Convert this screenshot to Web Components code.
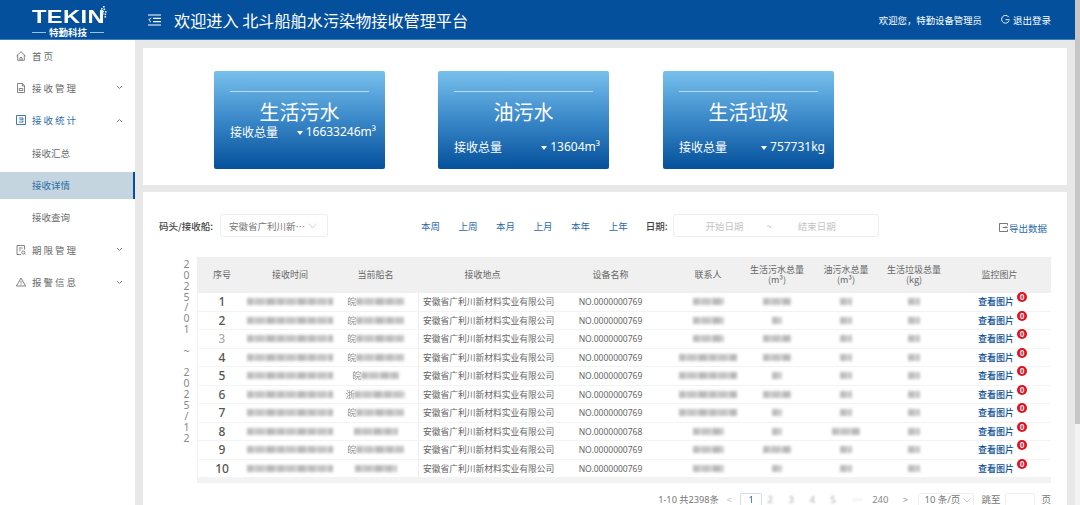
<!DOCTYPE html>
<html lang="zh">
<head>
<meta charset="utf-8">
<title>北斗船舶水污染物接收管理平台</title>
<style>
  html, body {
    margin: 0;
    height: 505px;
    overflow: hidden;
    font-family: "Noto Sans", "Noto Sans CJK SC", sans-serif;
  }
</style>
</head>
<body>
<tk-app></tk-app>
<script>
class TkHeader extends HTMLElement {
  constructor () {
    super()
    this.shadow = this.attachShadow({ mode: 'open' })
  }

  connectedCallback () {
    this.shadow.innerHTML =
      /* html */`
      <style>
        :host{
            align-items: center;
            background-color: #04509d;
            border-bottom: 1px solid #3d80bd;
            color: #fff;
            display: flex;
            height: 39px;
        }
        .logo{
            color: #fff;
            flex: none;
            padding-left: 32px;
            position: relative;
            width: 116px;
        }
        .logo-name{
            font-family: "Liberation Sans", sans-serif;
            font-size: 18.500px;
            font-weight: bold;
            letter-spacing: 0.3px;
            line-height: 18px;
            margin-top: 7px;
            transform: scaleX(1.28);
            transform-origin: left;
        }
        .logo-sub{
            align-items: center;
            display: flex;
            font-family: "Noto Sans CJK SC", sans-serif;
            font-size: 9.500px;
            font-weight: bold;
            gap: 3px;
            height: 12px;
            line-height: 12px;
            width: 72px;
        }
        .logo-sub i{
            background-color: #9dbfe0;
            flex: 1;
            height: 1px;
        }
        .logo svg{
            left: 97px;
            position: absolute;
            top: 5px;
        }
        .toggle{
            display: block;
            flex: none;
            margin-right: 13px;
        }
        h1{
            flex: 1;
            font-family: "Noto Sans CJK SC", sans-serif;
            font-size: 16.150px;
            font-weight: 400;
            margin: 0;
            white-space: pre;
        }
        .user{
            font-family: "Noto Sans CJK SC", sans-serif;
            font-size: 9.400px;
            margin-right: 19px;
        }
        .logout{
            align-items: center;
            display: flex;
            font-family: "Noto Sans CJK SC", sans-serif;
            font-size: 9.500px;
            gap: 3px;
            margin-right: 24px;
        }
      </style>
      <div class="logo">
        <div class="logo-name">TEKIN</div>
        <div class="logo-sub"><i></i><span>特勤科技</span><i></i></div>
        <svg width="10" height="12" viewBox="0 0 10 12" fill="#e4eff9">
          <rect x="6" y="0" width="1.6" height="1.6"/><rect x="4" y="2" width="1.6" height="1.6"/><rect x="6.500" y="2.500" width="1.6" height="1.6"/>
          <rect x="3" y="4.500" width="1.6" height="1.6"/><rect x="5.500" y="4.800" width="1.6" height="1.6"/><rect x="8" y="5" width="1.6" height="1.6"/>
          <rect x="5" y="7" width="1.6" height="1.6"/><rect x="7.500" y="7.500" width="1.6" height="1.6"/><rect x="7.500" y="10" width="1.6" height="1.6"/>
        </svg>
      </div>
      <svg class="toggle" width="13" height="12" viewBox="0 0 13 12" fill="none" stroke="#fff" stroke-width="1.2">
        <path d="M0 1h13M5 4.300h8M5 7.600h8M0 11h13"/><path d="M3 3.800 0.800 6 3 8.200" stroke-width="1"/>
      </svg>
      <h1>欢迎进入 北斗船舶水污染物接收管理平台</h1>
      <span class="user">欢迎您，特勤设备管理员</span>
      <span class="logout">
        <svg width="9" height="9" viewBox="0 0 9 9" fill="none" stroke="#fff" stroke-width="0.9"><path d="M7.800 2.200A3.900 3.900 0 1 0 8.200 5.500M4.500 4.700h4"/></svg>
        退出登录
      </span>
      `
  }
}

customElements.define('tk-header', TkHeader)

class TkMenuItem extends HTMLElement {
  constructor () {
    super()
    this.shadow = this.attachShadow({ mode: 'open' })
  }

  connectedCallback () {
    const arrow = this.getAttribute('arrow')
    const chevron = arrow
      ? `<svg class="arrow" width="7" height="5" viewBox="0 0 7 5" fill="none" stroke="currentColor" stroke-width="0.9"><path d="${arrow === 'up' ? 'M1 4 3.500 1.500 6 4' : 'M1 1 3.500 3.500 6 1'}"/></svg>`
      : ''
    this.shadow.innerHTML =
      /* html */`
      <style>
        :host{
            align-items: center;
            color: #6a6a6a;
            display: flex;
            font-family: "Noto Sans CJK SC", sans-serif;
            font-size: 9.500px;
            height: 27px;
            letter-spacing: 2px;
            padding-left: 16px;
        }
        :host([open]){
            color: #2d6ca8;
        }
        :host([sub]){
            letter-spacing: 0;
            padding-left: 32px;
        }
        :host([active]){
            background-color: #c5d5df;
            border-right: 2px solid #04509d;
            color: #2a6ba6;
        }
        .icon{
            display: flex;
            margin-right: 6px;
            width: 10px;
        }
        ::slotted(svg){
            display: block;
        }
        .arrow{
            color: #777;
            margin-left: auto;
            margin-right: 12px;
        }
      </style>
      ${this.hasAttribute('sub') ? '' : '<span class="icon"><slot name="icon"></slot></span>'}
      <span><slot></slot></span>
      ${chevron}
      `
  }
}

customElements.define('tk-menu-item', TkMenuItem)

class TkSidebar extends HTMLElement {
  constructor () {
    super()
    this.shadow = this.attachShadow({ mode: 'open' })
  }

  connectedCallback () {
    this.shadow.innerHTML =
      /* html */`
      <style>
        :host{
            background-color: #fff;
            display: flex;
            flex: none;
            flex-direction: column;
            gap: 5.400px;
            padding-top: 2px;
            width: 135px;
        }
      </style>
      <tk-menu-item>
        <svg slot="icon" width="10" height="10" viewBox="0 0 10 10" fill="none" stroke="#666" stroke-width="0.8"><path d="M0.500 5 5 0.700 9.500 5M1.700 4v5.300h6.600V4M4 9.300V6.500h2v2.800"/></svg>
        首页
      </tk-menu-item>
      <tk-menu-item arrow="down">
        <svg slot="icon" width="10" height="10" viewBox="0 0 10 10" fill="none" stroke="#666" stroke-width="0.8"><path d="M1.500 0.500h5l2 2.200v6.800h-7zM6.300 0.700v2.200h2.200M3.200 5.500h3.600v2h-3.600z"/></svg>
        接收管理
      </tk-menu-item>
      <tk-menu-item arrow="up" open>
        <svg slot="icon" width="10" height="10" viewBox="0 0 10 10" fill="none" stroke="#2d6ca8" stroke-width="0.9"><path d="M0.500 0.500h9v9h-9zM3 3h4v1.800H3.500M3 7h4V5.500"/></svg>
        接收统计
      </tk-menu-item>
      <tk-menu-item sub>接收汇总</tk-menu-item>
      <tk-menu-item sub active>接收详情</tk-menu-item>
      <tk-menu-item sub>接收查询</tk-menu-item>
      <tk-menu-item arrow="down">
        <svg slot="icon" width="10" height="10" viewBox="0 0 10 10" fill="none" stroke="#666" stroke-width="0.8"><path d="M8.500 4.500V0.500h-7.500v9h4M2.800 3h4M2.800 5h2"/><circle cx="7.300" cy="7.500" r="1.500"/><path d="M8.400 8.600 9.600 9.700"/></svg>
        期限管理
      </tk-menu-item>
      <tk-menu-item arrow="down">
        <svg slot="icon" width="10" height="10" viewBox="0 0 10 10" fill="none" stroke="#666" stroke-width="0.8"><path d="M5 1 9.600 9H0.400zM5 3.800v2.700M5 7.200v0.900"/></svg>
        报警信息
      </tk-menu-item>
      `
  }
}

customElements.define('tk-sidebar', TkSidebar)

class StatCard extends HTMLElement {
  constructor () {
    super()
    this.shadow = this.attachShadow({ mode: 'open' })
  }

  connectedCallback () {
    this.shadow.innerHTML =
      /* html */`
      <style>
        :host{
            background: linear-gradient(180deg, #78c0ec 0%, #3f8dcc 45%, #04509b 100%);
            border-radius: 2px;
            box-sizing: border-box;
            color: #fff;
            display: block;
            font-family: "Noto Sans CJK SC", sans-serif;
            height: 98px;
            padding: 20px 9px 0 16px;
            width: 171px;
        }
        .rule{
            background-color: #b5dbf3;
            height: 1px;
            margin-right: 7px;
        }
        .title{
            font-size: 20px;
            line-height: 24px;
            margin-right: 7px;
            margin-top: 8px;
            text-align: center;
        }
        .total{
            align-items: center;
            display: flex;
            font-size: 12px;
            justify-content: space-between;
            line-height: 16px;
        }
        :host([low]) .total{
            margin-top: 15px;
        }
        .value{
            align-items: center;
            display: flex;
            font-family: "Noto Sans", sans-serif;
            white-space: nowrap;
        }
        .value::before{
            border-left: 3.500px solid transparent;
            border-right: 3.500px solid transparent;
            border-top: 4px solid #fff;
            content: "";
            margin-right: 3px;
            margin-top: 2px;
        }
      </style>
      <div class="rule"></div>
      <div class="title">${this.getAttribute('title-text')}</div>
      <div class="total">
        <span>接收总量</span>
        <span class="value"><slot></slot></span>
      </div>
      `
  }
}

customElements.define('stat-card', StatCard)

class TkFilter extends HTMLElement {
  constructor () {
    super()
    this.shadow = this.attachShadow({ mode: 'open' })
  }

  connectedCallback () {
    const links = ['本周', '上周', '本月', '上月', '本年', '上年']
    this.shadow.innerHTML =
      /* html */`
      <style>
        :host{
            align-items: center;
            display: flex;
            font-family: "Noto Sans CJK SC", sans-serif;
            font-size: 9.500px;
            height: 23px;
        }
        .label{
            color: #444;
            font-weight: 500;
        }
        .box{
            align-items: center;
            border: 1px solid #eee;
            border-radius: 3px;
            box-sizing: border-box;
            color: #777;
            display: flex;
            height: 23px;
        }
        .select{
            margin-left: 7px;
            padding: 0 10px 0 8px;
            width: 108px;
        }
        .select span{
            flex: 1;
            white-space: nowrap;
        }
        .links{
            color: #2d6ca8;
            display: flex;
            gap: 18.500px;
            margin-left: 93px;
        }
        .date-label{
            margin-left: 18px;
        }
        .date{
            color: #c4c4c4;
            margin-left: 6px;
            padding-left: 31px;
            width: 206px;
        }
        .date .tilde{
            margin: 0 26px 0 23px;
        }
        .export{
            align-items: center;
            color: #2d6ca8;
            display: flex;
            gap: 1px;
            margin-left: auto;
            margin-right: 4px;
            margin-top: 4px;
        }
      </style>
      <span class="label">码头/接收船:</span>
      <div class="box select">
        <span>安徽省广利川新⋯</span>
        <svg width="9" height="6" viewBox="0 0 9 6" fill="none" stroke="#c8c8c8" stroke-width="0.8"><path d="M0.500 0.500 4.500 5 8.500 0.500"/></svg>
      </div>
      <div class="links">${links.map(text => `<span>${text}</span>`).join('')}</div>
      <span class="label date-label">日期:</span>
      <div class="box date">
        <span>开始日期</span><span class="tilde">~</span><span>结束日期</span>
      </div>
      <span class="export">
        <svg width="9" height="9" viewBox="0 0 9 9" fill="none" stroke="#555" stroke-width="0.8"><path d="M8.500 2.500V0.500H0.500v8h8V6.500M3.500 4.500h5M6.500 3 8 4.500"/></svg>
        导出数据
      </span>
      `
  }
}

customElements.define('tk-filter', TkFilter)

class RecordTable extends HTMLElement {
  constructor () {
    super()
    this.shadow = this.attachShadow({ mode: 'open' })
  }

  connectedCallback () {
    // province char, name, contact, sewage, oil smudge widths, device suffix
    const rows = [
      ['皖', 48, 31, 28, 12, '769'], ['皖', 48, 31, 10, 12, '769'], ['皖', 48, 31, 28, 12, '769'], ['皖', 48, 58, 28, 12, '769'],
      ['皖', 38, 58, 10, 12, '769'], ['浙', 51, 58, 28, 12, '769'], ['皖', 48, 58, 10, 12, '769'], ['', 44, 31, 10, 28, '768'],
      ['皖', 48, 31, 28, 12, '769'], ['', 42, 31, 10, 12, '769']
    ]
    const smudge = width => `<i class="smudge" style="width:${width}px"></i>`
    this.shadow.innerHTML =
      /* html */`
      <style>
        :host{
            display: flex;
            font-family: "Noto Sans", "Noto Sans CJK SC", sans-serif;
        }
        .dates{
            box-sizing: border-box;
            color: #888;
            flex: none;
            font-size: 10.500px;
            line-height: 10.850px;
            padding: 2px 5px 0 22px;
            text-align: center;
            width: 38px;
        }
        .table{
            box-shadow: 0 5px 0 #f3f3f3;
            flex: 1;
        }
        .row{
            display: grid;
            grid-template-columns: 50px 86px 85px 129px 127px 68px 70px 68px 68px 103px;
        }
        .head{
            background-color: #f0f0f0;
            color: #666;
            font-family: "Noto Sans CJK SC", sans-serif;
            font-size: 9px;
            height: 36px;
            line-height: 10px;
        }
        .head div{
            align-items: center;
            display: flex;
            justify-content: center;
            text-align: center;
        }
        .body{
            border-bottom: 1px solid #f3f3f3;
            box-shadow: inset 1px 0 0 #f3f3f3;
            box-sizing: border-box;
            color: #666;
            font-size: 8.500px;
            height: 18.500px;
        }
        .body div{
            align-items: center;
            display: flex;
            justify-content: center;
            white-space: nowrap;
        }
        .body .num{
            color: #555;
            font-size: 12px;
            font-weight: 500;
        }
        .body .faded{
            color: #aaa;
            filter: blur(0.500px);
        }
        .body .place{
            border-left: 1px solid #eee;
            font-family: "Noto Sans CJK SC", sans-serif;
            font-size: 8.750px;
            justify-content: flex-start;
            padding-left: 4px;
        }
        .prov{
            color: #8a8a8a;
            filter: blur(0.400px);
            font-family: "Noto Sans CJK SC", sans-serif;
            font-size: 8.750px;
        }
        .smudge{
            background: repeating-linear-gradient(90deg, #bcbcbc 0 6px, #d2d2d2 6px 9px, #c4c4c4 9px 17px, #d6d6d6 17px 20px, #b8b8b8 20px 27px, #cecece 27px 31px);
            display: block;
            filter: blur(1.700px);
            height: 7px;
        }
        .link{
            color: #0c4f95;
            font-family: "Noto Sans CJK SC", sans-serif;
            font-size: 9px;
            font-weight: 500;
            margin-right: 7px;
            position: relative;
        }
        .badge{
            background-color: #e3101f;
            border-radius: 50%;
            color: #fff;
            font-size: 8px;
            font-weight: bold;
            height: 10px;
            left: calc(100% + 3px);
            line-height: 10px;
            position: absolute;
            text-align: center;
            top: -3px;
            width: 10px;
        }
      </style>
      <div class="dates">2<br>0<br>2<br>5<br>/<br>0<br>1<br><br>~<br><br>2<br>0<br>2<br>5<br>/<br>1<br>2</div>
      <div class="table">
        <div class="row head">
          <div>序号</div><div>接收时间</div><div>当前船名</div><div>接收地点</div><div>设备名称</div><div>联系人</div>
          <div><span>生活污水总量<br>(m³)</span></div><div><span>油污水总量<br>(m³)</span></div><div><span>生活垃圾总量<br>(kg)</span></div><div>监控图片</div>
        </div>
        ${rows.map((row, index) => /* html */`
        <div class="row body">
          <div class="num${index === 2 ? ' faded' : ''}">${index + 1}</div>
          <div>${smudge(86)}</div>
          <div>${row[0] ? `<span class="prov">${row[0]}</span>` : ''}${smudge(row[1])}</div>
          <div class="place">安徽省广利川新材料实业有限公司</div>
          <div>NO.0000000${row[5]}</div>
          <div>${smudge(row[2])}</div>
          <div>${smudge(row[3])}</div>
          <div>${smudge(row[4])}</div>
          <div>${smudge(12)}</div>
          <div><span class="link">查看图片<span class="badge">0</span></span></div>
        </div>`).join('')}
      </div>
      `
  }
}

customElements.define('record-table', RecordTable)

class TkPager extends HTMLElement {
  constructor () {
    super()
    this.shadow = this.attachShadow({ mode: 'open' })
  }

  connectedCallback () {
    this.shadow.innerHTML =
      /* html */`
      <style>
        :host{
            align-items: flex-start;
            color: #777;
            display: flex;
            font-family: "Noto Sans", "Noto Sans CJK SC", sans-serif;
            font-size: 9.500px;
            justify-content: flex-end;
            line-height: 10px;
            margin-top: 15px;
            padding-top: 2px;
        }
        .total{
            font-size: 9.200px;
            white-space: nowrap;
            width: 60px;
        }
        .arrow{
            color: #999;
            margin-left: 12px;
            text-align: center;
            width: 10px;
        }
        .prev{
            color: #c4c4c4;
            margin-left: 6px;
        }
        .current{
            border: 1px solid #cfe0ee;
            border-radius: 2px;
            box-sizing: border-box;
            color: #2d6ca8;
            filter: blur(0.400px);
            height: 18px;
            margin-left: 6px;
            margin-top: -2px;
            padding-top: 1px;
            text-align: center;
            width: 22px;
        }
        .page{
            color: #aaa;
            filter: blur(0.900px);
            margin-left: 11px;
            text-align: center;
            width: 10px;
        }
        .page.first{
            margin-left: 3px;
        }
        .page.more{
            margin-left: 14px;
        }
        .last{
            color: #888;
            margin-left: 10px;
        }
        .box{
            border: 1px solid #eee;
            border-radius: 2px;
            box-sizing: border-box;
            height: 18px;
            margin-top: -2px;
        }
        .size{
            display: flex;
            gap: 3px;
            margin-left: 8px;
            margin-right: 7px;
            padding: 1px 0 0 5px;
            white-space: nowrap;
            width: 56px;
        }
        .size svg{
            margin-top: 3px;
        }
        .jump{
            margin-left: 5px;
            margin-right: 6px;
            width: 30px;
        }
      </style>
      <span class="total">1-10 共2398条</span>
      <span class="arrow prev">&lt;</span>
      <span class="current">1</span>
      <span class="page first">2</span><span class="page">3</span><span class="page">4</span><span class="page">5</span>
      <span class="page more">⋯</span>
      <span class="last">240</span>
      <span class="arrow">&gt;</span>
      <div class="box size">10 条/页
        <svg width="8" height="5" viewBox="0 0 8 5" fill="none" stroke="#bbb" stroke-width="0.8"><path d="M0.500 0.500 4 4 7.500 0.500"/></svg>
      </div>
      <span>跳至</span>
      <div class="box jump"></div>
      <span>页</span>
      `
  }
}

customElements.define('tk-pager', TkPager)

class TkApp extends HTMLElement {
  constructor () {
    super()
    this.shadow = this.attachShadow({ mode: 'open' })
  }

  connectedCallback () {
    this.shadow.innerHTML =
      /* html */`
      <style>
        :host{
            display: flex;
            height: 505px;
            overflow: hidden;
        }
        .frame{
            display: flex;
            flex: 1;
            flex-direction: column;
            min-width: 0;
        }
        .body{
            background-color: #e8e8e8;
            display: flex;
            flex: 1;
            min-height: 0;
        }
        .main{
            box-sizing: border-box;
            display: flex;
            flex: 1;
            flex-direction: column;
            gap: 7px;
            padding: 8px 8px 0;
        }
        .stats{
            background-color: #fff;
            box-sizing: border-box;
            display: flex;
            flex: none;
            gap: 53px;
            height: 137px;
            padding: 23px 0 0 71px;
        }
        .stats stat-card:last-child{
            margin-left: 1px;
        }
        .records{
            background-color: #fff;
            box-sizing: border-box;
            flex: 1;
            min-height: 0;
            overflow: hidden;
            padding: 22px 16px 0;
        }
        record-table{
            margin-top: 20px;
        }
        .scrollbar{
            background-color: #f3f3f3;
            flex: none;
            width: 5px;
        }
        .thumb{
            background-color: #c6c6c6;
            height: 424px;
        }
      </style>
      <div class="frame">
        <tk-header></tk-header>
        <div class="body">
          <tk-sidebar></tk-sidebar>
          <main class="main">
            <section class="stats">
              <stat-card title-text="生活污水">16633246m³</stat-card>
              <stat-card title-text="油污水" low>13604m³</stat-card>
              <stat-card title-text="生活垃圾" low>757731kg</stat-card>
            </section>
            <section class="records">
              <tk-filter></tk-filter>
              <record-table></record-table>
              <tk-pager></tk-pager>
            </section>
          </main>
        </div>
      </div>
      <div class="scrollbar"><div class="thumb"></div></div>
      `
  }
}

customElements.define('tk-app', TkApp)
</script>
</body>
</html>
